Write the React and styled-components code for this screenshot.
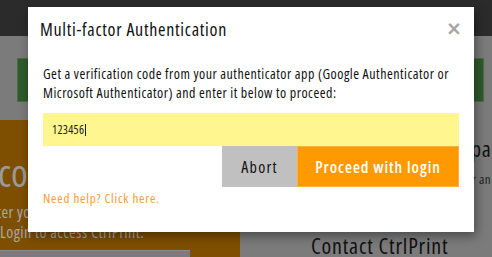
import React from "react";
import styled, { createGlobalStyle } from "styled-components";

const Global = createGlobalStyle`
  html, body { margin: 0; padding: 0; }
  body {
    width: 492px; height: 257px; overflow: hidden;
    background: #7b7b7b;
    font-family: "Open Sans", "Noto Sans", sans-serif;
    font-stretch: 75%;
  }
  button { font-stretch: 75%; }
`;

const Page = styled.div`
  position: relative;
  width: 492px;
  height: 257px;
  overflow: hidden;
  background: #7b7b7b;
`;

const TopBar = styled.div`
  height: 36px;
  background: #2b2b2b;
`;

const GreenBar = styled.div`
  margin: 22px 8px 0 17px;
  height: 42px;
  background: #2f5b2b;
  border: 1px solid #4a6e45;
`;

const Columns = styled.div`
  display: flex;
  margin-top: 18px;
`;

const OrangeCol = styled.div`
  flex: 0 0 240px;
  height: 140px;
  background: #7f4f00;
  display: flex;
  flex-direction: column;
`;

const BigFaded = styled.div`
  font-size: 38px;
  color: #9a9a9a;
  margin-top: 30px;
  line-height: 44px;
  margin-left: -2px;
  white-space: nowrap;
`;

const SmallFaded = styled.div`
  font-size: 16px;
  color: #a8a8a8;
  line-height: 20px;
  letter-spacing: 0.4px;
  margin-left: ${p => p.$shift || 0}px;
  margin-top: ${p => p.$top || 0}px;
  white-space: nowrap;
`;

const GrayInset = styled.div`
  margin-top: auto;
  width: 190px;
  height: 9px;
  background: #7b7b7b;
  border-top: 1px solid #8a8a8a;
`;

const RightCol = styled.div`
  flex: 1;
  min-width: 0;
  display: flex;
  flex-direction: column;
  padding-left: 71px;
`;

const Heading = styled.div`
  font-size: 22px;
  color: #111;
  line-height: 28px;
  letter-spacing: 0.8px;
  margin-left: ${p => p.$indent || 0}px;
  margin-top: ${p => p.$top || 0}px;
  white-space: nowrap;
`;

const Tiny = styled.div`
  font-size: 13px;
  color: #222;
  margin-left: 161px;
  margin-top: 8px;
  letter-spacing: 0.4px;
  white-space: nowrap;
`;

const Modal = styled.div`
  position: absolute;
  left: 28px;
  top: 7px;
  width: 446px;
  height: 225px;
  background: #fff;
  box-shadow: 2px 4px 10px rgba(0, 0, 0, 0.4);
  box-sizing: border-box;
  padding: 0 15px;
  display: flex;
  flex-direction: column;
`;

const Header = styled.div`
  display: flex;
  align-items: center;
  justify-content: space-between;
  height: 44px;
  margin: 0 0 0 -3px;
`;

const Title = styled.h4`
  margin: 0;
  font-size: 18px;
  font-weight: 400;
  letter-spacing: 0.72px;
  color: #111;
`;

const Close = styled.button`
  border: 0;
  background: none;
  padding: 0;
  margin-right: -3px;
  margin-top: -2px;
  font-size: 19px;
  font-weight: 700;
  color: #a4a4a4;
  line-height: 1;
  font-family: "DejaVu Sans", sans-serif;
  font-stretch: 100%;
  cursor: pointer;
`;

const Text = styled.p`
  margin: 13px 0 0;
  font-size: 14px;
  line-height: 19px;
  letter-spacing: 0.5px;
  color: #111;
`;

const CodeInput = styled.div`
  margin-top: 11px;
  height: 33px;
  background: #fff68f;
  display: flex;
  align-items: center;
  padding-left: 9px;
  font-size: 12px;
  letter-spacing: 0.3px;
  color: #222;
`;

const Caret = styled.span`
  display: inline-block;
  width: 1px;
  height: 12px;
  background: #222;
  margin-left: 1px;
`;

const Actions = styled.div`
  display: flex;
  justify-content: flex-end;
`;

const Button = styled.button`
  margin: 0;
  width: ${p => p.$w}px;
  height: 41px;
  padding: 0;
  font-family: inherit;
  font-size: 16px;
  letter-spacing: ${p => (p.$primary ? 0.95 : 1.2)}px;
  background: ${p => (p.$primary ? "#ff9900" : "#c0c0c0")};
  color: ${p => (p.$primary ? "#fff" : "#111")};
  font-weight: ${p => (p.$primary ? 600 : 400)};
  border: ${p => (p.$primary ? "1px solid #ffb040" : "0")};
  box-sizing: border-box;
`;

const Help = styled.a`
  margin-top: 2px;
  font-size: 13px;
  letter-spacing: 0.8px;
  color: #ff9a33;
  text-decoration: none;
`;

export default function App() {
  return (
    <>
      <Global />
      <Page>
        <TopBar />
        <GreenBar />
        <Columns>
          <OrangeCol>
            <BigFaded>co</BigFaded>
            <SmallFaded $shift={-3} $top={8}>ter yo</SmallFaded>
            <SmallFaded $top={0}>Login to access CtrlPrint.</SmallFaded>
            <GrayInset />
          </OrangeCol>
          <RightCol>
            <Heading $indent={160} $top={14}>pa</Heading>
            <Tiny>r an</Tiny>
            <Heading $top={43}>Contact CtrlPrint</Heading>
          </RightCol>
        </Columns>
        <Modal>
          <Header>
            <Title>Multi-factor Authentication</Title>
            <Close aria-label="Close">×</Close>
          </Header>
          <Text>
            Get a verification code from your authenticator app (Google Authenticator or
            Microsoft Authenticator) and enter it below to proceed:
          </Text>
          <CodeInput>
            123456<Caret />
          </CodeInput>
          <Actions>
            <Button $w={75}>Abort</Button>
            <Button $primary $w={162}>Proceed with login</Button>
          </Actions>
          <Help href="#">Need help? Click here.</Help>
        </Modal>
      </Page>
    </>
  );
}
